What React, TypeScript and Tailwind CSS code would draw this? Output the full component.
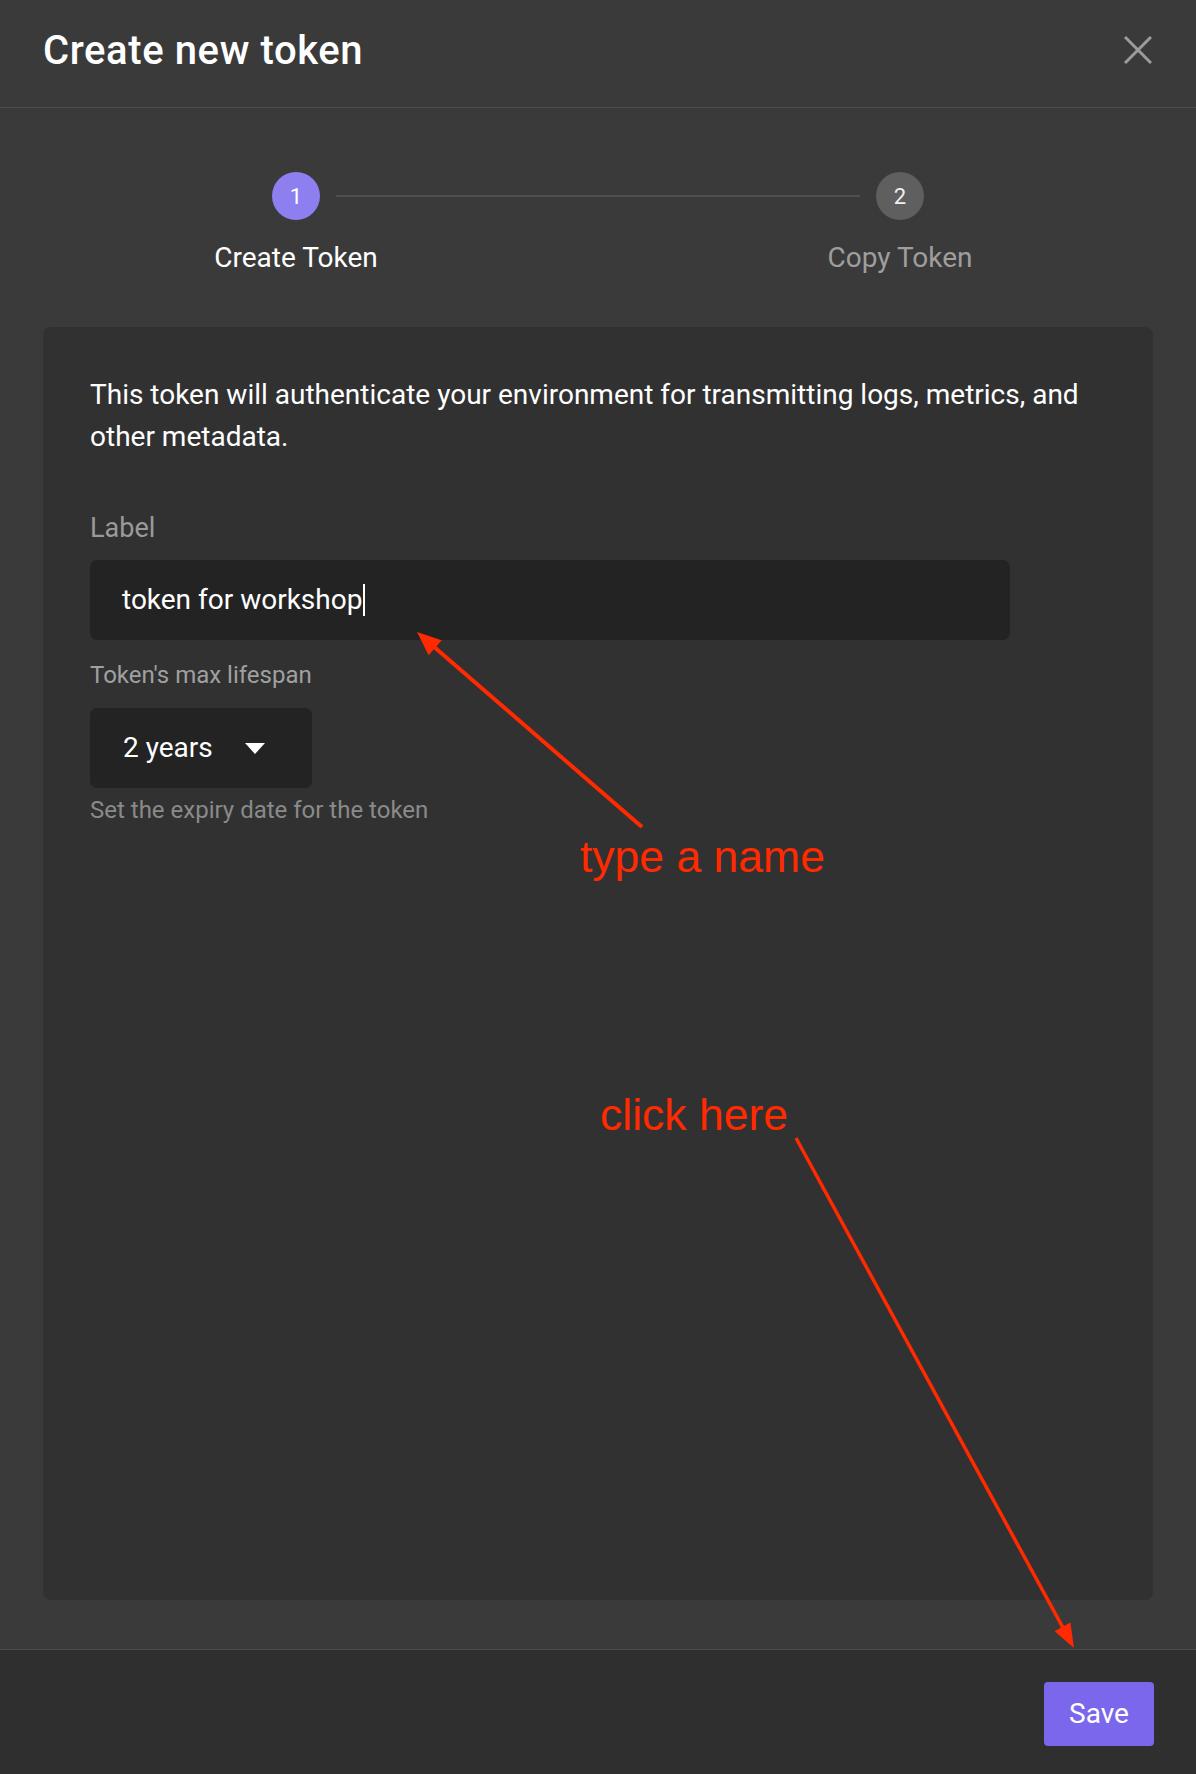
import React from "react";

function Arrow({ x1, y1, x2, y2, w = 4, hl = 24, hw = 10 }: { x1: number; y1: number; x2: number; y2: number; w?: number; hl?: number; hw?: number }) {
  const dx = x2 - x1;
  const dy = y2 - y1;
  const len = Math.sqrt(dx * dx + dy * dy);
  const ux = dx / len;
  const uy = dy / len;
  const bx = x2 - ux * hl;
  const by = y2 - uy * hl;
  const px = -uy;
  const py = ux;
  const pts = `${x2},${y2} ${bx + px * hw},${by + py * hw} ${bx - px * hw},${by - py * hw}`;
  return (
    <g>
      <line x1={x1} y1={y1} x2={bx + ux * 2} y2={by + uy * 2} stroke="#ff2a00" strokeWidth={w} />
      <polygon points={pts} fill="#ff2a00" />
    </g>
  );
}

export default function App() {
  const font = { fontFamily: "Roboto, 'Noto Sans', sans-serif" };
  return (
    <div className="relative w-[1196px] h-[1774px] flex flex-col bg-[#3a3a3a] overflow-hidden" style={font}>
      {/* Header */}
      <div className="h-[108px] shrink-0 border-b border-[#4d4d4d] flex items-start justify-between pl-[43px] pr-[44px] pt-[27px]">
        <h1 className="text-[40px] leading-[48px] font-medium text-white tracking-[0.6px]">Create new token</h1>
        <svg width="28" height="28" viewBox="0 0 28 28" className="mt-[9px]">
          <line x1="1" y1="1" x2="27" y2="27" stroke="#9b9b9b" strokeWidth="3" />
          <line x1="27" y1="1" x2="1" y2="27" stroke="#9b9b9b" strokeWidth="3" />
        </svg>
      </div>

      {/* Body */}
      <div className="flex-1 flex flex-col pt-[64px] pb-[49px]">
        {/* Stepper */}
        <div className="flex items-center px-[272px]">
          <div className="w-[48px] h-[48px] rounded-full bg-[#8e7ff0] flex items-center justify-center text-white text-[22px]">1</div>
          <div className="flex-1 mx-[16px] h-[2px] bg-[#505050]" />
          <div className="w-[48px] h-[48px] rounded-full bg-[#5f5f5f] flex items-center justify-center text-[#f0f0f0] text-[22px]">2</div>
        </div>
        <div className="flex justify-between px-[272px] mt-[21px]">
          <div className="w-[48px] flex justify-center">
            <span className="whitespace-nowrap text-[28px] leading-[34px] text-white">Create Token</span>
          </div>
          <div className="w-[48px] flex justify-center">
            <span className="whitespace-nowrap text-[28px] leading-[34px] text-[#9e9e9e]">Copy Token</span>
          </div>
        </div>

        {/* Card */}
        <div className="flex-1 mx-[43px] mt-[52px] rounded-[8px] bg-[#313131] pt-[47px] px-[47px]">
          <p className="text-[28px] leading-[42px] text-white">
            This token will authenticate your environment for transmitting logs, metrics, and other metadata.
          </p>
          <div className="mt-[51px] text-[27px] leading-[39px] text-[#9a9a9a]">Label</div>
          <div className="mt-[12px] w-[920px] h-[80px] rounded-[7px] bg-[#232323] flex items-center pl-[32px]">
            <span className="text-[28px] text-white">token for workshop</span>
            <span className="w-[2px] h-[32px] bg-white ml-[1px]" />
          </div>
          <div className="mt-[17px] text-[24px] leading-[36px] text-[#a0a0a0]">Token's max lifespan</div>
          <div className="mt-[15px] w-[222px] h-[80px] rounded-[7px] bg-[#232323] flex items-center pl-[33px]">
            <span className="text-[28px] text-white">2 years</span>
            <svg width="20" height="11" viewBox="0 0 20 11" className="ml-[32px]">
              <polygon points="0,0 20,0 10,11" fill="#ffffff" />
            </svg>
          </div>
          <div className="mt-[4px] text-[24px] leading-[36px] text-[#8a8a8a]">Set the expiry date for the token</div>
        </div>
      </div>

      {/* Footer */}
      <div className="h-[125px] shrink-0 border-t border-[#4d4d4d] bg-[#2f2f2f] flex justify-end items-start pt-[32px] pr-[42px]">
        <button className="w-[110px] h-[64px] rounded-[4px] bg-[#7b67eb] text-white text-[28px]">Save</button>
      </div>

      {/* Annotations overlay */}
      <svg className="absolute inset-0 pointer-events-none" width="1196" height="1774" viewBox="0 0 1196 1774">
        <Arrow x1={642} y1={827} x2={417} y2={632} w={4} hl={24} hw={10} />
        <Arrow x1={796} y1={1138} x2={1074} y2={1648} w={3.5} hl={24} hw={9} />
        <text x="580" y="872" fill="#ff2a00" fontSize="44.5" style={{ fontFamily: "'Liberation Sans', Arial, sans-serif" }}>type a name</text>
        <text x="600" y="1130" fill="#ff2a00" fontSize="44.5" style={{ fontFamily: "'Liberation Sans', Arial, sans-serif" }}>click here</text>
      </svg>
    </div>
  );
}
